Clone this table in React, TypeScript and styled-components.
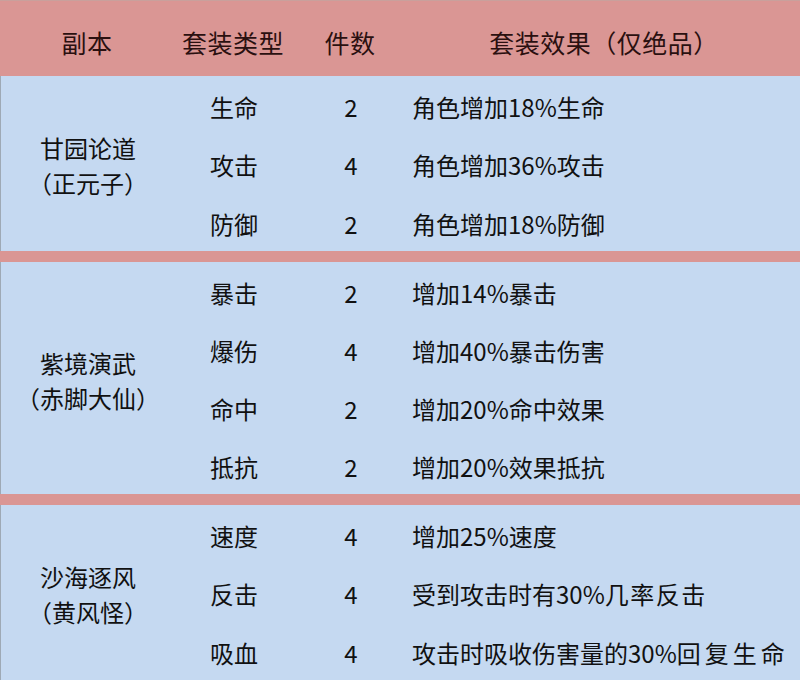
import React from "react";
import { createGlobalStyle, styled } from "styled-components";

const GlobalStyle = createGlobalStyle`
  html, body {
    margin: 0;
    padding: 0;
    background: #c5d9f1;
  }
  body {
    font-family: "Noto Sans CJK SC", "Noto Sans", sans-serif;
  }
`;

const COLS = "174px 118px 116px 1fr";

const Table = styled.div`
  width: 800px;
  height: 680px;
  display: flex;
  flex-direction: column;
  overflow: hidden;
`;

const HeaderRow = styled.div`
  display: grid;
  grid-template-columns: ${COLS};
  height: 76px;
  background: #da9694;
  border-top: 1px solid #c9a09c;
  box-sizing: border-box;
`;

const HeaderCell = styled.div`
  display: flex;
  align-items: center;
  justify-content: center;
  padding-top: 6px;
  font-size: 25px;
  color: #2a1010;
  letter-spacing: 0.5px;
`;

const Group = styled.div<{ $rows: number; $height: number }>`
  display: grid;
  grid-template-columns: ${COLS};
  grid-template-rows: repeat(${(p) => p.$rows}, 1fr);
  height: ${(p) => p.$height}px;
  background: #c5d9f1;
  border-left: 1px solid #9ea9b5;
  box-sizing: border-box;
`;

const NameCell = styled.div`
  grid-column: 1;
  grid-row: 1 / -1;
  display: flex;
  flex-direction: column;
  align-items: center;
  justify-content: center;
  padding-top: 4px;
  font-size: 24px;
  line-height: 35px;
  color: #111;
`;

const Cell = styled.div<{ $align?: "center" | "left" }>`
  display: flex;
  align-items: center;
  justify-content: ${(p) => (p.$align === "left" ? "flex-start" : "center")};
  padding-left: ${(p) => (p.$align === "left" ? "3px" : "0")};
  padding-top: 3px;
  font-size: 24px;
  color: #111;
  white-space: nowrap;
`;

// the tail of the longer effects is set a little looser in the sheet
const Spread = styled.span<{ $gap: number }>`
  letter-spacing: ${(p) => p.$gap}px;
`;

const Separator = styled.div`
  height: 11px;
  background: #da9694;
  flex-shrink: 0;
`;

type SetRow = { type: string; count: number; effect: string; tail?: string; gap?: number };
type Dungeon = { name: string; boss: string; height: number; rows: SetRow[] };

const dungeons: Dungeon[] = [
  {
    name: "甘园论道",
    boss: "（正元子）",
    height: 175,
    rows: [
      { type: "生命", count: 2, effect: "角色增加18%生命" },
      { type: "攻击", count: 4, effect: "角色增加36%攻击" },
      { type: "防御", count: 2, effect: "角色增加18%防御" },
    ],
  },
  {
    name: "紫境演武",
    boss: "（赤脚大仙）",
    height: 232,
    rows: [
      { type: "暴击", count: 2, effect: "增加14%暴击" },
      { type: "爆伤", count: 4, effect: "增加40%暴击伤害" },
      { type: "命中", count: 2, effect: "增加20%命中效果" },
      { type: "抵抗", count: 2, effect: "增加20%效果抵抗" },
    ],
  },
  {
    name: "沙海逐风",
    boss: "（黄风怪）",
    height: 175,
    rows: [
      { type: "速度", count: 4, effect: "增加25%速度" },
      { type: "反击", count: 4, effect: "受到攻击时有30%", tail: "几率反击", gap: 1.5 },
      { type: "吸血", count: 4, effect: "攻击时吸收伤害量的30%", tail: "回复生命", gap: 4 },
    ],
  },
];

export default function App() {
  return (
    <>
      <GlobalStyle />
      <Table>
        <HeaderRow>
          <HeaderCell>副本</HeaderCell>
          <HeaderCell>套装类型</HeaderCell>
          <HeaderCell>件数</HeaderCell>
          <HeaderCell>套装效果（仅绝品）</HeaderCell>
        </HeaderRow>
        {dungeons.map((d, i) => (
          <React.Fragment key={d.name}>
            {i > 0 && <Separator />}
            <Group $rows={d.rows.length} $height={d.height}>
              <NameCell>
                <span>{d.name}</span>
                <span>{d.boss}</span>
              </NameCell>
              {d.rows.map((r, j) => (
                <React.Fragment key={r.type}>
                  <Cell style={{ gridRow: j + 1 }}>{r.type}</Cell>
                  <Cell style={{ gridRow: j + 1 }}>{r.count}</Cell>
                  <Cell $align="left" style={{ gridRow: j + 1 }}>
                    {r.effect}
                    {r.tail && <Spread $gap={r.gap ?? 0}>{r.tail}</Spread>}
                  </Cell>
                </React.Fragment>
              ))}
            </Group>
          </React.Fragment>
        ))}
      </Table>
    </>
  );
}
